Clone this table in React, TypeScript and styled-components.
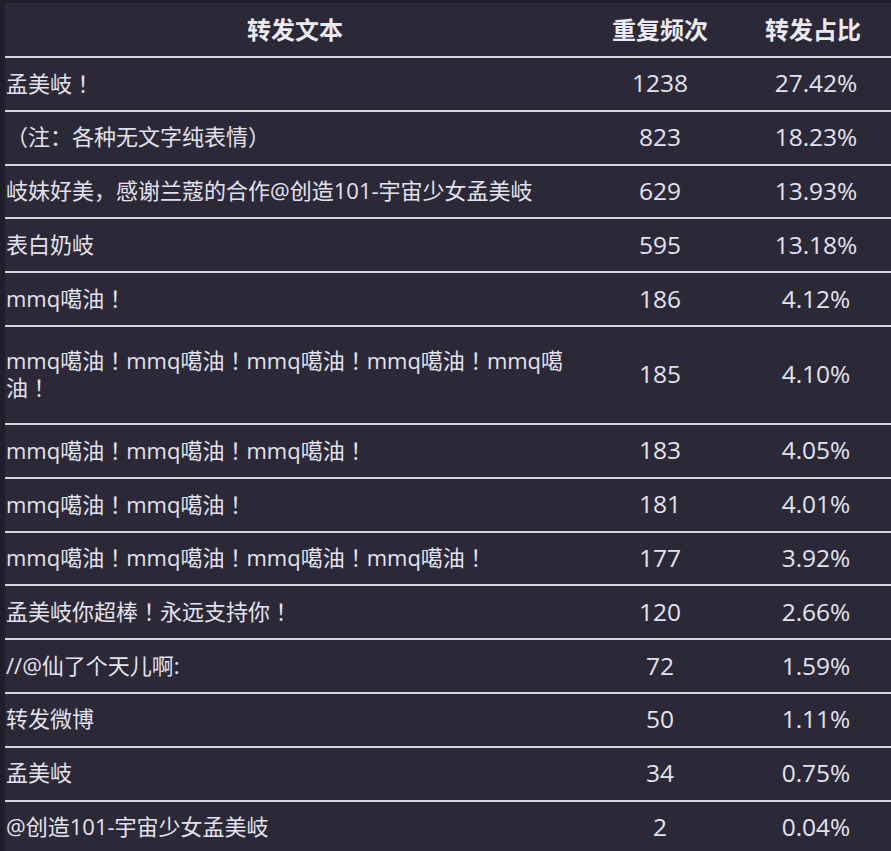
import React from "react";
import styled, { createGlobalStyle } from "styled-components";

const Global = createGlobalStyle`
  html, body { margin: 0; padding: 0; background: #1f1e2a; }
  body { font-family: "Open Sans", "Noto Sans CJK SC", sans-serif; }
`;

const Page = styled.div`
  width: 891px;
  height: 851px;
  box-sizing: border-box;
  padding: 3px 0 0 5px;
  background: #1f1e2a;
  overflow: hidden;
`;

const Table = styled.div`
  background: #2b2937;
  height: 100%;
  display: flex;
  flex-direction: column;
`;

const Row = styled.div<{ $h: number; $line?: boolean }>`
  display: grid;
  grid-template-columns: 580px 150px 1fr;
  align-items: center;
  height: ${(p) => p.$h}px;
  box-sizing: content-box;
  border-bottom: ${(p) => (p.$line === false ? "none" : "2px solid #d6d4df")};
  flex-shrink: 0;
`;

const HeadCell = styled.div`
  text-align: center;
  font-family: "Noto Sans CJK SC", sans-serif;
  font-size: 24px;
  font-weight: 700;
  color: #ebeaf0;
  padding-bottom: 2px;
`;

const TextCell = styled.div`
  font-family: "Open Sans", "Noto Sans CJK SC", sans-serif;
  font-size: 22px;
  line-height: 26px;
  color: #e4e2ec;
  padding-left: 1px;
  padding-right: 10px;
  padding-bottom: 3px;
  word-break: break-all;
`;

const Bang = styled.span`
  font-family: "Noto Sans CJK TC", sans-serif;
`;

const NumCell = styled.div<{ $shift?: number }>`
  text-align: center;
  font-family: "Open Sans", sans-serif;
  font-size: 24.5px;
  color: #e4e2ec;
  padding-bottom: 2px;
  padding-left: ${(p) => p.$shift ?? 0}px;
`;

const rows: [string, string, string][] = [
  ["孟美岐！", "1238", "27.42%"],
  ["（注：各种无文字纯表情）", "823", "18.23%"],
  ["岐妹好美，感谢兰蔻的合作@创造101-宇宙少女孟美岐", "629", "13.93%"],
  ["表白奶岐", "595", "13.18%"],
  ["mmq噶油！", "186", "4.12%"],
  ["mmq噶油！mmq噶油！mmq噶油！mmq噶油！mmq噶油！", "185", "4.10%"],
  ["mmq噶油！mmq噶油！mmq噶油！", "183", "4.05%"],
  ["mmq噶油！mmq噶油！", "181", "4.01%"],
  ["mmq噶油！mmq噶油！mmq噶油！mmq噶油！", "177", "3.92%"],
  ["孟美岐你超棒！永远支持你！", "120", "2.66%"],
  ["//@仙了个天儿啊:", "72", "1.59%"],
  ["转发微博", "50", "1.11%"],
  ["孟美岐", "34", "0.75%"],
  ["@创造101-宇宙少女孟美岐", "2", "0.04%"],
];

function renderText(t: string) {
  const parts = t.split("！");
  return parts.map((p, i) => (
    <React.Fragment key={i}>
      {p}
      {i < parts.length - 1 && <Bang>！</Bang>}
    </React.Fragment>
  ));
}

export default function App() {
  return (
    <Page>
      <Global />
      <Table>
        <Row $h={53}>
          <HeadCell>转发文本</HeadCell>
          <HeadCell>重复频次</HeadCell>
          <HeadCell>转发占比</HeadCell>
        </Row>
        {rows.map(([t, n, p], i) => (
          <Row key={i} $h={i === 5 ? 96 : 51.8} $line={i !== rows.length - 1}>
            <TextCell>{renderText(t)}</TextCell>
            <NumCell>{n}</NumCell>
            <NumCell $shift={6}>{p}</NumCell>
          </Row>
        ))}
      </Table>
    </Page>
  );
}
